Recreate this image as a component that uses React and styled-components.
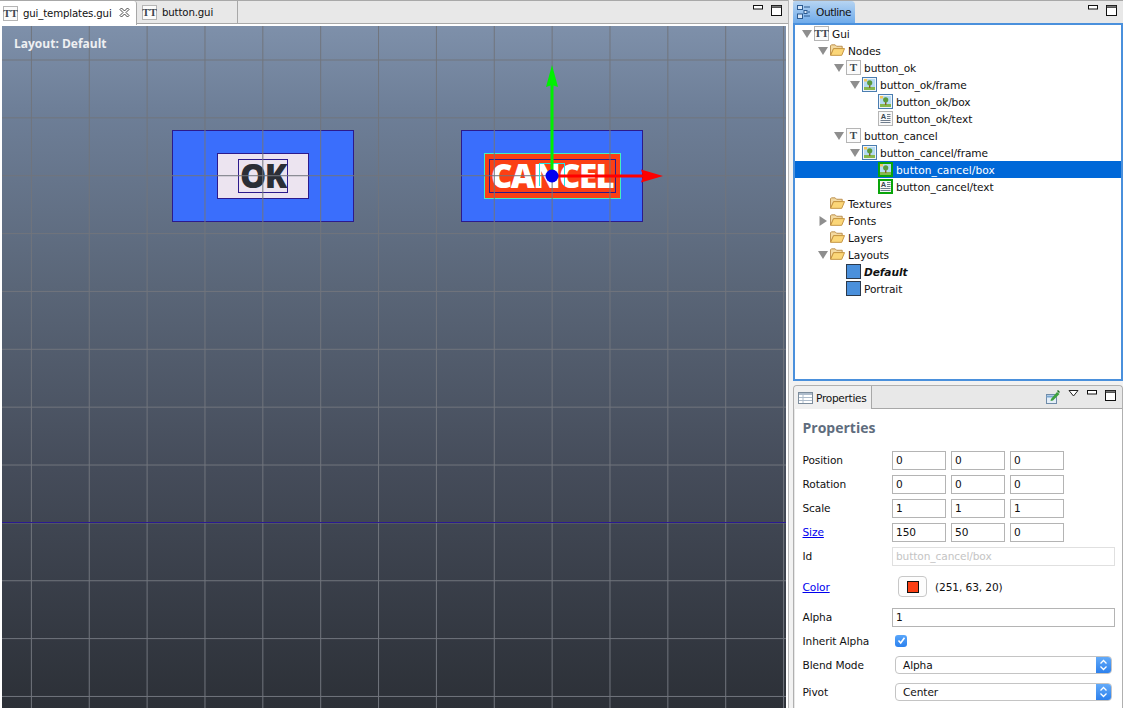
import React from 'react';
import styled, { createGlobalStyle } from 'styled-components';

const GlobalStyle = createGlobalStyle`
  html, body {
    margin: 0;
    padding: 0;
    height: 100%;
    overflow: hidden;
    background: #f2f2f2;
  }
  body {
    font-family: "DejaVu Sans", "Liberation Sans", sans-serif;
    font-size: 11px;
    color: #111;
  }
`;

const uiFont = `"DejaVu Sans", "Liberation Sans", sans-serif`;

const Page = styled.div`
  display: flex;
  width: 1123px;
  height: 708px;
  overflow: hidden;
`;

const EditorArea = styled.div`
  width: 789px;
  height: 708px;
  margin-right: 4px;
  flex: none;
  display: flex;
  flex-direction: column;
  background: #fff;
  border-right: 1px solid #b8b8b8;
  box-sizing: border-box;
`;

const TabBar = styled.div`
  height: 24px;
  flex: none;
  display: flex;
  align-items: stretch;
  background: #e8e8e8;
  border-top: 1px solid #a8a8a8;
  border-bottom: 1px solid #a8a8a8;
  box-sizing: border-box;
  position: relative;
`;

const Tab = styled.div`
  width: ${p => p.$width}px;
  display: flex;
  align-items: center;
  gap: 5px;
  padding-left: ${p => p.$pad}px;
  box-sizing: border-box;
  font-family: ${uiFont};
  font-size: 10.2px;
  letter-spacing: -0.15px;
  background: ${p => (p.$active ? '#fff' : 'transparent')};
  border-right: 1px solid #a8a8a8;
  margin-bottom: ${p => (p.$active ? '-2px' : '0')};
  border-top-right-radius: ${p => (p.$active ? '3px' : '0')};
  position: relative;
`;

const TabClose = styled.svg`
  position: absolute;
  right: 6px;
  top: 6px;
`;

const Spacer = styled.div`
  flex: 1;
`;

const WindowButtons = styled.div`
  display: flex;
  align-items: flex-start;
  gap: 8px;
  padding: 4px 6px 0 0;
`;

const CanvasWrap = styled.div`
  flex: 1;
  margin: 2px 2px 0 2px;
  position: relative;
  overflow: hidden;
  background: linear-gradient(180deg, #7e90aa 0%, #6e7f98 12%, #5a6678 38%, #454c5a 65%, #2c3037 100%);
`;

const CanvasLabel = styled.div`
  position: absolute;
  left: 12px;
  top: 9px;
  font-family: "Open Sans", sans-serif;
  font-weight: 700;
  font-size: 12px;
  color: #eef0f2;
`;

const SceneAxis = styled.div`
  position: absolute;
  left: 0;
  right: 0;
  top: 496px;
  height: 1px;
  background: #2a1a90;
`;

const GridOverlay = styled.div`
  position: absolute;
  inset: 0;
  background-image:
    linear-gradient(#70747c 1px, transparent 1px),
    linear-gradient(90deg, #70747c 1px, transparent 1px);
  background-size: 57.87px 57.87px;
  background-position: 0 33.5px, 28.9px 0;
`;

const NodeFrame = styled.div`
  position: absolute;
  left: ${p => p.$x}px;
  top: ${p => p.$y}px;
  width: 182px;
  height: 92px;
  box-sizing: border-box;
  display: flex;
  align-items: center;
  justify-content: center;
  background: #3a6efc;
  border: 1px solid #2c1a8c;
`;

const NodeBox = styled.div`
  width: ${p => (p.$selected ? 137 : 92)}px;
  height: 46px;
  box-sizing: border-box;
  display: flex;
  align-items: center;
  justify-content: center;
  background: ${p => p.$fill};
  border: 1px solid ${p => (p.$selected ? '#45efc0' : '#2c1a8c')};
`;

const NodeText = styled.div`
  box-sizing: border-box;
  height: 34px;
  width: ${p => p.$width}px;
  display: flex;
  align-items: center;
  justify-content: center;
  border: 1px solid #2c1a8c;
  font-family: "Open Sans", sans-serif;
  font-weight: 800;
  font-size: 33px;
  line-height: 30px;
  letter-spacing: ${p => p.$spacing}px;
  color: ${p => p.$color};
`;

const Gizmo = styled.svg`
  position: absolute;
  left: 520px;
  top: 30px;
`;

const SidePanels = styled.div`
  width: 330px;
  flex: none;
  display: flex;
  flex-direction: column;
  gap: 4px;
`;

const OutlinePanel = styled.div`
  height: 381px;
  flex: none;
  display: flex;
  flex-direction: column;
  box-sizing: border-box;
`;

const PanelHeader = styled.div`
  height: 23px;
  flex: none;
  display: flex;
  align-items: stretch;
  background: #e8e8e8;
  border-top: 1px solid #a8a8a8;
  box-sizing: border-box;
  position: relative;
`;

const OutlineTab = styled.div`
  width: 62px;
  display: flex;
  align-items: center;
  gap: 5px;
  padding-left: 4px;
  box-sizing: border-box;
  font-family: ${uiFont};
  font-size: 10.6px;
  letter-spacing: -0.45px;
  background: linear-gradient(180deg, #b6d4f2 0%, #6fabea 100%);
  border-top-right-radius: 4px;
  border-top-left-radius: 2px;
`;

const TreeBox = styled.div`
  flex: 1;
  box-sizing: border-box;
  border: 2px solid #4a90dc;
  background: #fff;
`;

const TreeRow = styled.div`
  height: 17px;
  display: flex;
  align-items: center;
  box-sizing: border-box;
  padding-left: ${p => 6 + p.$level * 16}px;
  background: ${p => (p.$selected ? '#0068d8' : 'transparent')};
  color: ${p => (p.$selected ? '#fff' : '#111')};
  font-family: ${uiFont};
  font-size: 10.6px;
  letter-spacing: ${p => (p.$selected ? '0.1px' : '-0.08px')};
  font-style: ${p => (p.$italic ? 'italic' : 'normal')};
  ${p => p.$italic && 'font-weight: 700;'}
  white-space: nowrap;
`;

const Twisty = styled.span`
  width: 12px;
  height: 12px;
  flex: none;
  display: flex;
  align-items: center;
  justify-content: center;
  margin-right: 1px;
`;

const TreeIcon = styled.span`
  width: 15px;
  height: 15px;
  flex: none;
  margin-right: 3px;
  display: flex;
  box-sizing: border-box;
`;

const PropertiesPanel = styled.div`
  flex: 1;
  display: flex;
  flex-direction: column;
  border: 1px solid #b0b0b0;
  border-top-left-radius: 4px;
  border-top-right-radius: 4px;
  border-bottom: 0;
  min-height: 0;
  background: #e8e8e8;
`;

const PropertiesHeader = styled(PanelHeader)`
  height: 23px;
  border-top: 0;
  background: #e8e8e8;
  border-bottom: 1px solid #a8a8a8;
  border-top-left-radius: 4px;
  border-top-right-radius: 4px;
`;

const PropertiesTab = styled.div`
  width: 78px;
  margin-bottom: -1px;
  display: flex;
  align-items: center;
  gap: 3px;
  padding-left: 4px;
  box-sizing: border-box;
  font-family: ${uiFont};
  font-size: 10.6px;
  letter-spacing: -0.3px;
  background: #f0f0f0;
  border-right: 1px solid #a8a8a8;
  border-top-left-radius: 4px;
`;

const FormBody = styled.div`
  flex: 1;
  margin: 0 0 0 1px;
  padding: 0 6px 0 7.5px;
  background: #fff;
`;

const FormTitle = styled.div`
  height: 36px;
  display: flex;
  align-items: center;
  font-family: "Open Sans", sans-serif;
  font-weight: 700;
  font-size: 14px;
  color: #5f6d7e;
  margin-bottom: 3px;
`;

const FormRow = styled.div`
  height: ${p => p.$height}px;
  display: flex;
  align-items: center;
  font-family: ${uiFont};
  font-size: 10.6px;
  letter-spacing: -0.1px;
`;

const Label = styled.div`
  width: 89.5px;
  flex: none;
`;

const FieldLink = styled.a`
  color: #0000ee;
  text-decoration: underline;
`;

const Fields = styled.div`
  display: flex;
  gap: 5px;
  flex: 1;
  min-width: 0;
`;

const Field = styled.div`
  width: ${p => (p.$wide ? '223px' : '54px')};
  height: 19px;
  box-sizing: border-box;
  padding-left: 3px;
  display: flex;
  align-items: center;
  border: 1px solid ${p => (p.$disabled ? '#e0e0e0' : '#b4b4b4')};
  color: ${p => (p.$disabled ? '#c4c4c4' : '#111')};
`;

const ColorButton = styled.div`
  width: 29px;
  height: 21px;
  margin: 0 8px 0 6px;
  box-sizing: border-box;
  display: flex;
  align-items: center;
  justify-content: center;
  background: #fdfdfd;
  border: 1px solid #c8c8c8;
  border-radius: 4px;
`;

const Swatch = styled.div`
  width: 12px;
  height: 12px;
  box-sizing: border-box;
  background: #fb3f14;
  border: 1px solid #111;
`;

const CheckMark = styled.div`
  width: 12px;
  height: 12px;
  margin-left: 3px;
  display: flex;
  align-items: center;
  justify-content: center;
  background: linear-gradient(180deg, #5aa6fa, #2a80ee);
  border-radius: 3px;
`;

const Select = styled.div`
  width: 217px;
  height: 18px;
  margin-left: 3px;
  box-sizing: border-box;
  display: flex;
  align-items: center;
  justify-content: space-between;
  padding-left: 7px;
  background: #fff;
  border: 1px solid #c4c4c4;
  border-radius: 4px;
  overflow: hidden;
`;

const SelectArrows = styled.div`
  width: 15px;
  height: 18px;
  display: flex;
  align-items: center;
  justify-content: center;
  background: linear-gradient(180deg, #66adfa, #2a7eec);
`;

const MinIcon = () => (
  <svg width="10" height="5" viewBox="0 0 10 5">
    <rect x="0.5" y="0.5" width="9" height="3.5" fill="#fff" stroke="#111" />
  </svg>
);

const MaxIcon = () => (
  <svg width="11" height="11" viewBox="0 0 11 11">
    <rect x="0.5" y="0.5" width="10" height="10" fill="#fff" stroke="#111" />
    <rect x="0.5" y="0.5" width="10" height="2" fill="#777" stroke="#111" strokeWidth="0.6" />
  </svg>
);

const DocIcon = ({ label = 'TT' }) => (
  <svg width="15" height="15" viewBox="0 0 15 15">
    <rect x="0.5" y="0.5" width="14" height="14" fill="#fbfbfb" stroke="#b5b5b5" />
    <text x="7.5" y="11" textAnchor="middle" fontFamily="Liberation Serif, serif" fontWeight="700" fontSize="11" fill="#3d4650">
      {label}
    </text>
  </svg>
);

const FolderIcon = () => (
  <svg width="16" height="14" viewBox="0 0 16 14">
    <path d="M0.5 12.5V2.5L1.5 1.5H5.5L7 3H13V5.5H4L0.5 12.5Z" fill="#f3d9a0" stroke="#b98c4a" />
    <path d="M0.7 12.7L3.8 5.5H15.5L12.5 12.7Z" fill="#fbd678" stroke="#c4923e" />
  </svg>
);

const PictureIcon = ({ marked }) => (
  <svg width="15" height="15" viewBox="0 0 15 15">
    {marked
      ? <rect x="1" y="1" width="13" height="13" fill="#eef4fa" stroke="#0aa50a" strokeWidth="2" />
      : <rect x="0.5" y="0.5" width="14" height="14" fill="#eef4fa" stroke="#4a7db0" />}
    <rect x="2" y="2" width="11" height="8" fill="#b4daf2" />
    <rect x="2" y="2" width="3" height="2.5" fill="#f4c659" />
    <rect x="2" y="10" width="11" height="3" fill="#86b84e" />
    <rect x="7" y="7" width="1.4" height="4" fill="#8a5a2a" />
    <circle cx="7.7" cy="5.8" r="2.6" fill="#5a9b3c" />
  </svg>
);

const TextIcon = ({ marked }) => (
  <svg width="15" height="15" viewBox="0 0 15 15">
    {marked
      ? <rect x="1" y="1" width="13" height="13" fill="#f8f8f8" stroke="#0aa50a" strokeWidth="2" />
      : <rect x="0.5" y="0.5" width="14" height="14" fill="#f8f8f8" stroke="#b5b5b5" />}
    <text x="5.5" y="8" textAnchor="middle" fontFamily="Liberation Sans, sans-serif" fontWeight="700" fontSize="7.5" fill="#3d4650">A</text>
    <path d="M9 3.5H12.5M9 5.5H12.5M9 7.5H12.5M2.5 9.5H12.5M2.5 11.5H12.5" stroke="#6f7c8c" strokeWidth="1" />
  </svg>
);

const LayoutIcon = () => (
  <svg width="15" height="15" viewBox="0 0 15 15">
    <rect x="0.5" y="0.5" width="14" height="14" fill="#4a90dc" stroke="#2c3a4c" />
  </svg>
);

const iconFor = {
  gui: <DocIcon />,
  node: <DocIcon label="T" />,
  folder: <FolderIcon />,
  picture: <PictureIcon />,
  pictureMarked: <PictureIcon marked />,
  textMarked: <TextIcon marked />,
  text: <TextIcon />,
  layout: <LayoutIcon />,
};

const TwistyGlyph = ({ open }) => (
  <svg width="10" height="10" viewBox="0 0 10 10">
    {open ? <path d="M0 1H10L5 9Z" fill="#8e8e8e" /> : <path d="M1.5 0V10L9 5Z" fill="#8e8e8e" />}
  </svg>
);

const treeRows = [
  { level: 0, twisty: 'open', icon: 'gui', name: 'Gui' },
  { level: 1, twisty: 'open', icon: 'folder', name: 'Nodes' },
  { level: 2, twisty: 'open', icon: 'node', name: 'button_ok' },
  { level: 3, twisty: 'open', icon: 'picture', name: 'button_ok/frame' },
  { level: 4, icon: 'picture', name: 'button_ok/box' },
  { level: 4, icon: 'text', name: 'button_ok/text' },
  { level: 2, twisty: 'open', icon: 'node', name: 'button_cancel' },
  { level: 3, twisty: 'open', icon: 'picture', name: 'button_cancel/frame' },
  { level: 4, icon: 'pictureMarked', name: 'button_cancel/box', selected: true },
  { level: 4, icon: 'textMarked', name: 'button_cancel/text' },
  { level: 1, icon: 'folder', name: 'Textures' },
  { level: 1, twisty: 'closed', icon: 'folder', name: 'Fonts' },
  { level: 1, icon: 'folder', name: 'Layers' },
  { level: 1, twisty: 'open', icon: 'folder', name: 'Layouts' },
  { level: 2, icon: 'layout', name: 'Default', italic: true },
  { level: 2, icon: 'layout', name: 'Portrait' },
];

const vectorRows = [
  { label: 'Position', values: ['0', '0', '0'] },
  { label: 'Rotation', values: ['0', '0', '0'] },
  { label: 'Scale', values: ['1', '1', '1'] },
  { label: 'Size', values: ['150', '50', '0'], link: true },
];

const SelectControl = ({ value }) => (
  <Select>
    {value}
    <SelectArrows>
      <svg width="9" height="12" viewBox="0 0 9 12">
        <path d="M1.5 4.5L4.5 1.5L7.5 4.5M1.5 7.5L4.5 10.5L7.5 7.5" fill="none" stroke="#fff" strokeWidth="1.3" />
      </svg>
    </SelectArrows>
  </Select>
);

const App = () => (
  <Page>
    <GlobalStyle />
    <EditorArea>
      <TabBar>
        <Tab $active $width={137} $pad={3}>
          <DocIcon />
          gui_templates.gui
          <TabClose width="11" height="11" viewBox="0 0 11 11">
            <path d="M1 2.5L2.5 1L5.5 4L8.5 1L10 2.5L7 5.5L10 8.5L8.5 10L5.5 7L2.5 10L1 8.5L4 5.5Z" fill="#fff" stroke="#333" strokeWidth="0.9" />
          </TabClose>
        </Tab>
        <Tab $width={101} $pad={5}>
          <DocIcon />
          button.gui
        </Tab>
        <Spacer />
        <WindowButtons>
          <MinIcon />
          <MaxIcon />
        </WindowButtons>
      </TabBar>
      <CanvasWrap>
        <NodeFrame $x={170} $y={104}>
          <NodeBox $fill="#ece4f0">
            <NodeText $width={50} $spacing={-1.5} $color="#2b2e36">OK</NodeText>
          </NodeBox>
        </NodeFrame>
        <NodeFrame $x={459} $y={104}>
          <NodeBox $fill="#fb3f14" $selected>
            <NodeText $width={127} $spacing={-1.6} $color="#fff">CANCEL</NodeText>
          </NodeBox>
        </NodeFrame>
        <GridOverlay />
        <SceneAxis />
        <CanvasLabel>Layout: Default</CanvasLabel>
        <Gizmo width="150" height="130" viewBox="0 0 150 130">
          <rect x="17.5" y="107.5" width="25" height="25" fill="none" stroke="#22e6e6" />
          <rect x="28.5" y="28" width="3" height="92" fill="#00f000" />
          <path d="M30 9L24 31L30 29L36 31Z" fill="#00f000" />
          <rect x="30" y="118.5" width="91" height="3" fill="#ff0000" />
          <path d="M141 120L119 113.5L121 120L119 126.5Z" fill="#ff0000" />
          <circle cx="30" cy="120" r="6.5" fill="#0000f0" />
        </Gizmo>
      </CanvasWrap>
    </EditorArea>
    <SidePanels>
      <OutlinePanel>
        <PanelHeader>
          <OutlineTab>
            <svg width="14" height="14" viewBox="0 0 14 14">
              <rect x="0.5" y="0.5" width="5" height="4" fill="#d9e8f8" stroke="#2c5a90" />
              <rect x="0.5" y="9" width="5" height="4.5" fill="#d9e8f8" stroke="#2c5a90" />
              <rect x="7" y="5.5" width="3" height="3" fill="#d9e8f8" stroke="#2c5a90" />
              <path d="M7 2H13M11 7H13M7 11H13" stroke="#2c5a90" />
            </svg>
            Outline
          </OutlineTab>
          <Spacer />
          <WindowButtons>
            <MinIcon />
            <MaxIcon />
          </WindowButtons>
        </PanelHeader>
        <TreeBox>
          {treeRows.map(row => (
            <TreeRow key={row.name} $level={row.level} $selected={row.selected} $italic={row.italic}>
              <Twisty>{row.twisty && <TwistyGlyph open={row.twisty === 'open'} />}</Twisty>
              <TreeIcon>{iconFor[row.icon]}</TreeIcon>
              {row.name}
            </TreeRow>
          ))}
        </TreeBox>
      </OutlinePanel>
      <PropertiesPanel>
        <PropertiesHeader>
          <PropertiesTab>
            <svg width="15" height="12" viewBox="0 0 15 12">
              <rect x="0.5" y="0.5" width="14" height="11" fill="#fff" stroke="#7c8c9c" />
              <rect x="1" y="1" width="13" height="2" fill="#aebccb" />
              <path d="M1 5.5H14M1 8.5H14M5 3V11" stroke="#aebccb" />
            </svg>
            Properties
          </PropertiesTab>
          <Spacer />
          <WindowButtons>
            <svg width="14" height="14" viewBox="0 0 14 14">
              <rect x="0.5" y="4.5" width="10" height="9" fill="#e4eef8" stroke="#6f8ba8" />
              <path d="M0.5 6.5H10.5" stroke="#7aa6d0" strokeWidth="2" />
              <path d="M5 9L11 2L13.5 4L7 10.5L4.5 11Z" fill="#3ea13e" />
              <path d="M11.5 0.5L13.5 2.5" stroke="#1e6e1e" strokeWidth="1.5" />
            </svg>
            <svg width="11" height="7" viewBox="0 0 11 7">
              <path d="M1 0.5H10L5.5 6Z" fill="#fff" stroke="#222" />
            </svg>
            <MinIcon />
            <MaxIcon />
          </WindowButtons>
        </PropertiesHeader>
        <FormBody>
          <FormTitle>Properties</FormTitle>
          {vectorRows.map(row => (
            <FormRow key={row.label} $height={24}>
              <Label>{row.link ? <FieldLink>{row.label}</FieldLink> : row.label}</Label>
              <Fields>
                {row.values.map((value, i) => (
                  <Field key={i}>{value}</Field>
                ))}
              </Fields>
            </FormRow>
          ))}
          <FormRow $height={24}>
            <Label>Id</Label>
            <Field $wide $disabled>button_cancel/box</Field>
          </FormRow>
          <FormRow $height={37}>
            <Label><FieldLink>Color</FieldLink></Label>
            <ColorButton><Swatch /></ColorButton>
            (251, 63, 20)
          </FormRow>
          <FormRow $height={24}>
            <Label>Alpha</Label>
            <Field $wide>1</Field>
          </FormRow>
          <FormRow $height={23}>
            <Label>Inherit Alpha</Label>
            <CheckMark>
              <svg width="9" height="9" viewBox="0 0 9 9">
                <path d="M1.5 4.5L3.7 7L7.5 1.8" fill="none" stroke="#fff" strokeWidth="1.6" />
              </svg>
            </CheckMark>
          </FormRow>
          <FormRow $height={26}>
            <Label>Blend Mode</Label>
            <SelectControl value="Alpha" />
          </FormRow>
          <FormRow $height={27}>
            <Label>Pivot</Label>
            <SelectControl value="Center" />
          </FormRow>
        </FormBody>
      </PropertiesPanel>
    </SidePanels>
  </Page>
);

export default App;
